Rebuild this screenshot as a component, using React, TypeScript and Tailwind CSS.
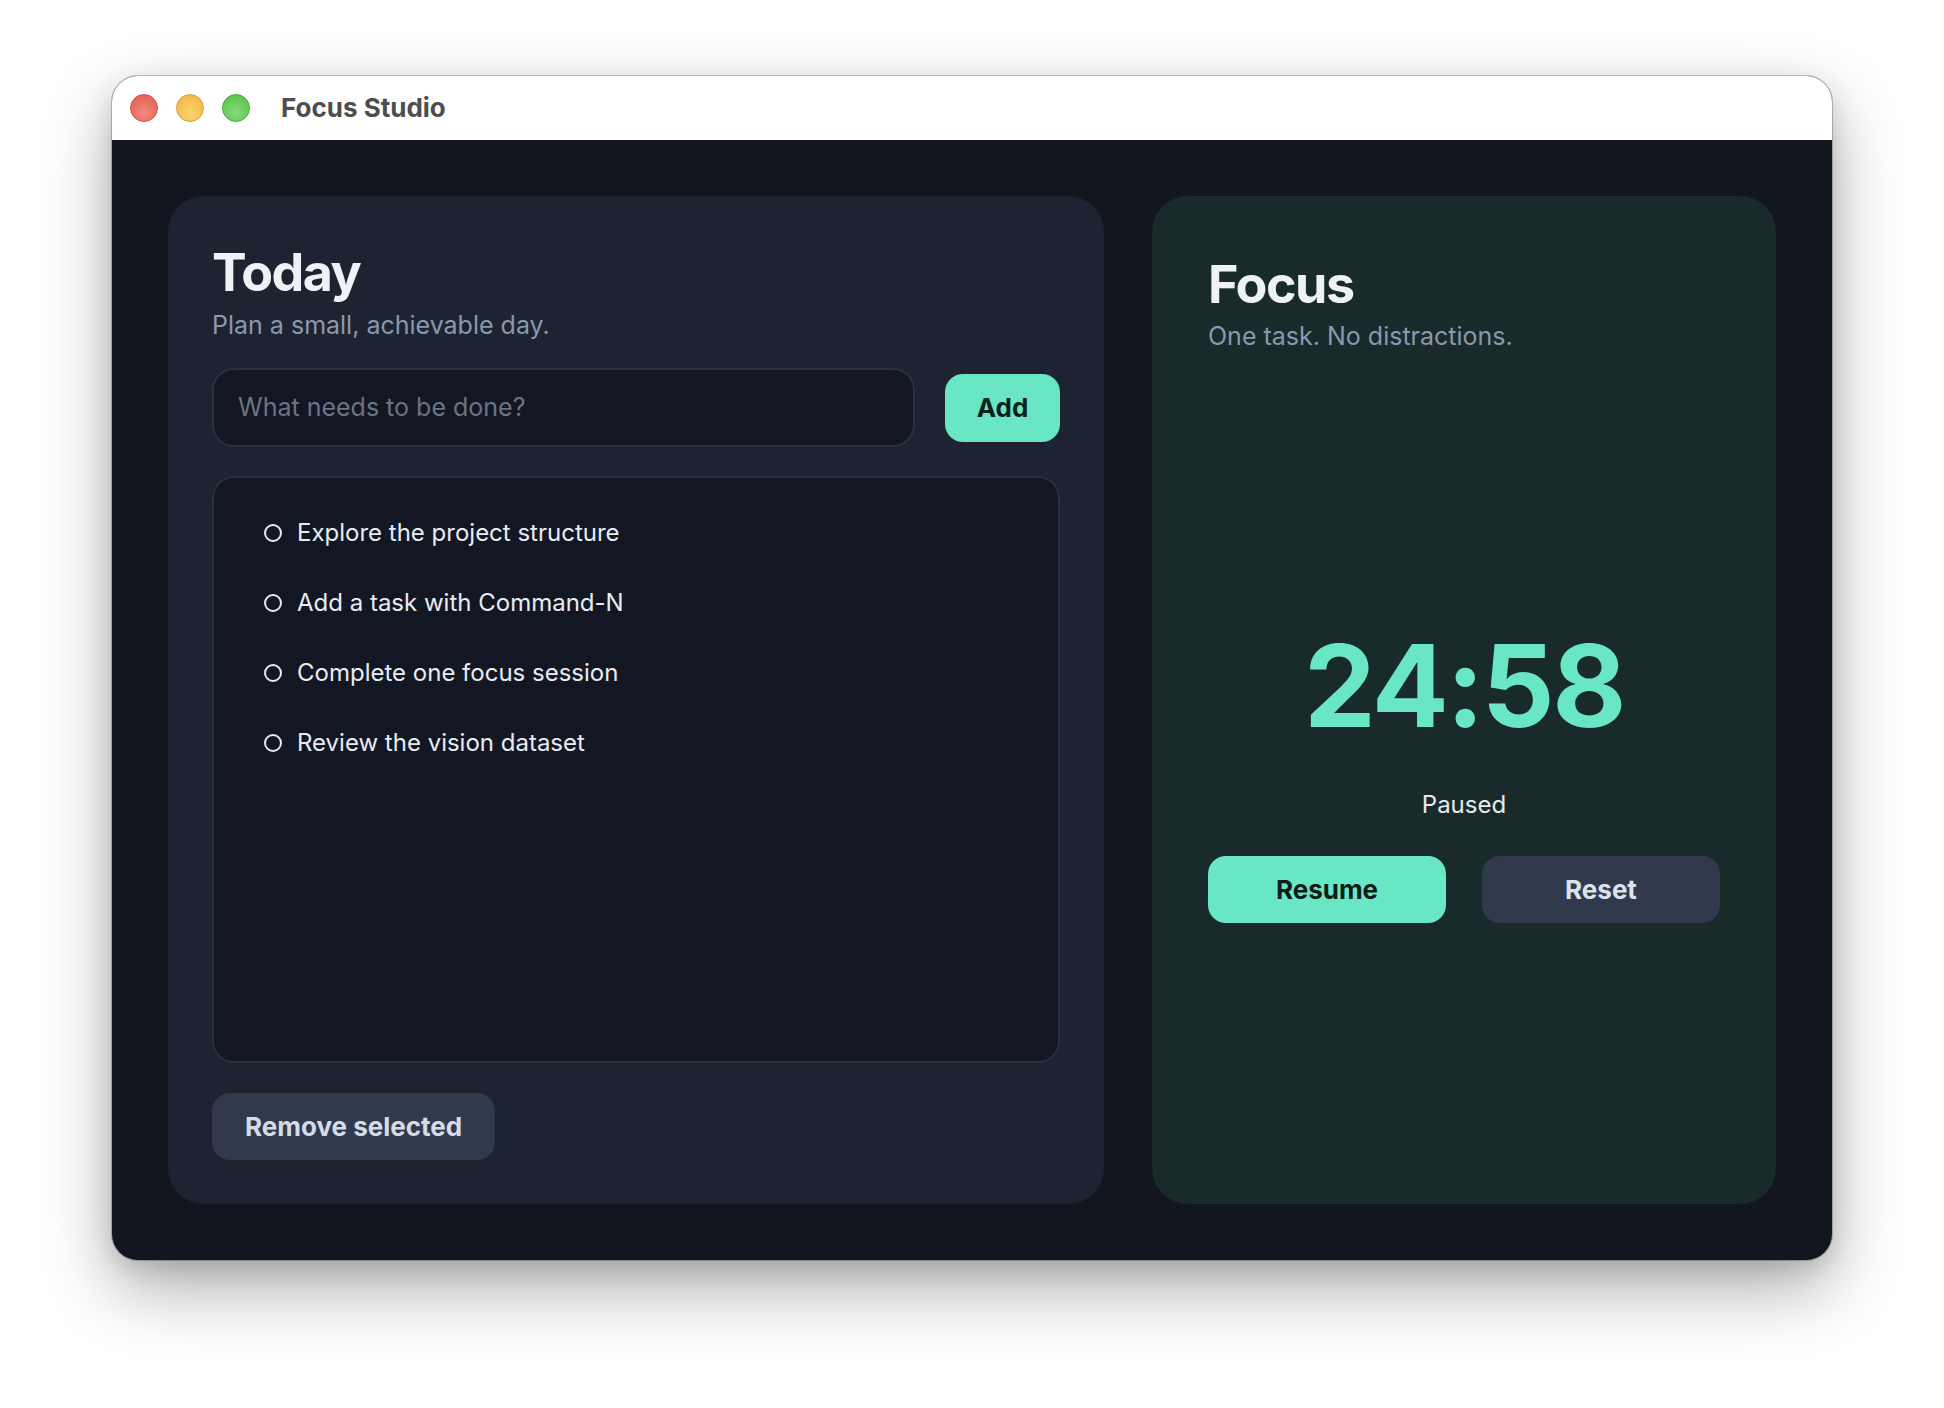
import React from "react";

const tasks = [
  "Explore the project structure",
  "Add a task with Command-N",
  "Complete one focus session",
  "Review the vision dataset",
];

export default function App() {
  return (
    <div className="w-[1944px] h-[1408px] bg-white flex justify-center pt-[76px] font-[Inter,sans-serif] antialiased">
      <div className="w-[1720px] h-[1184px] rounded-[26px] overflow-hidden flex flex-col bg-[#12161f] shadow-[0_0_0_1px_rgba(0,0,0,0.22),0_28px_70px_rgba(0,0,0,0.33),0_8px_24px_rgba(0,0,0,0.12)]">
        {/* Title bar */}
        <div className="h-[64px] shrink-0 bg-white flex items-center pl-[18px]">
          <div className="flex items-center gap-[18px]">
            <span className="w-[28px] h-[28px] rounded-full bg-[radial-gradient(circle_at_50%_70%,#f08a80,#e5574b)] border border-[#cf4f44]" />
            <span className="w-[28px] h-[28px] rounded-full bg-[radial-gradient(circle_at_50%_70%,#f9d36e,#efb53e)] border border-[#d59f35]" />
            <span className="w-[28px] h-[28px] rounded-full bg-[radial-gradient(circle_at_50%_70%,#86d97a,#55bd47)] border border-[#47a93b]" />
          </div>
          <span className="ml-[31px] text-[26px] leading-none font-bold text-[#4d4d4d]">Focus Studio</span>
        </div>

        {/* Content */}
        <div className="flex-1 grid grid-cols-[3fr_2fr] gap-[48px] p-[56px]">
          {/* Today card */}
          <div className="bg-[#1d2331] rounded-[36px] p-[44px] flex flex-col min-h-0">
            <h1 className="text-[52px] leading-[1.25] font-bold text-[#eef2f7] tracking-[-1.5px]">Today</h1>
            <p className="mt-[5px] text-[25px] leading-[1.25] text-[#8a98ae]">Plan a small, achievable day.</p>

            <div className="mt-[27px] flex items-center gap-[30px]">
              <div className="flex-1 h-[79px] rounded-[22px] border-2 border-[#2a3141] bg-[#121723] flex items-center px-[24px]">
                <span className="text-[25px] leading-none text-[#6c7382]">What needs to be done?</span>
              </div>
              <button className="w-[115px] h-[68px] rounded-[18px] bg-[#69e6c3] text-[26px] font-bold text-[#0f1f1a]">
                Add
              </button>
            </div>

            <div className="mt-[29px] flex-1 rounded-[22px] border-2 border-[#283040] bg-[#121723] pt-[20px] px-[50px]">
              {tasks.map((t) => (
                <div key={t} className="h-[70px] flex items-center gap-[15px]">
                  <span className="w-[18px] h-[18px] rounded-full border-2 border-[#e6eaf0] shrink-0" />
                  <span className="text-[24px] leading-[1.2] text-[#e8ecf2]">{t}</span>
                </div>
              ))}
            </div>

            <button className="mt-[30px] self-start h-[67px] px-[33px] rounded-[18px] bg-[#313a4d] text-[26px] font-bold text-[#d5dce6]">
              Remove selected
            </button>
          </div>

          {/* Focus card */}
          <div className="bg-[#192a2a] rounded-[36px] p-[56px] flex flex-col">
            <h2 className="text-[52px] leading-[1.25] font-bold text-[#eef2f7] tracking-[-1.5px]">Focus</h2>
            <p className="mt-[4px] text-[25px] leading-[1.25] text-[#8a98ae]">One task. No distractions.</p>

            <div className="flex-1 flex flex-col justify-center pt-[52px]">
              <div className="text-center text-[114px] leading-none font-bold text-[#69e6c3] tracking-[-2.5px]">24:58</div>
              <div className="mt-[48px] text-center text-[24px] leading-[1.2] text-[#e6eaef]">Paused</div>
              <div className="mt-[36px] flex gap-[36px]">
                <button className="flex-1 h-[67px] rounded-[18px] bg-[#69e6c3] text-[26px] font-bold text-[#0f1d18]">
                  Resume
                </button>
                <button className="flex-1 h-[67px] rounded-[18px] bg-[#313a4d] text-[26px] font-bold text-[#dbe2ec]">
                  Reset
                </button>
              </div>
            </div>
          </div>
        </div>
      </div>
    </div>
  );
}
